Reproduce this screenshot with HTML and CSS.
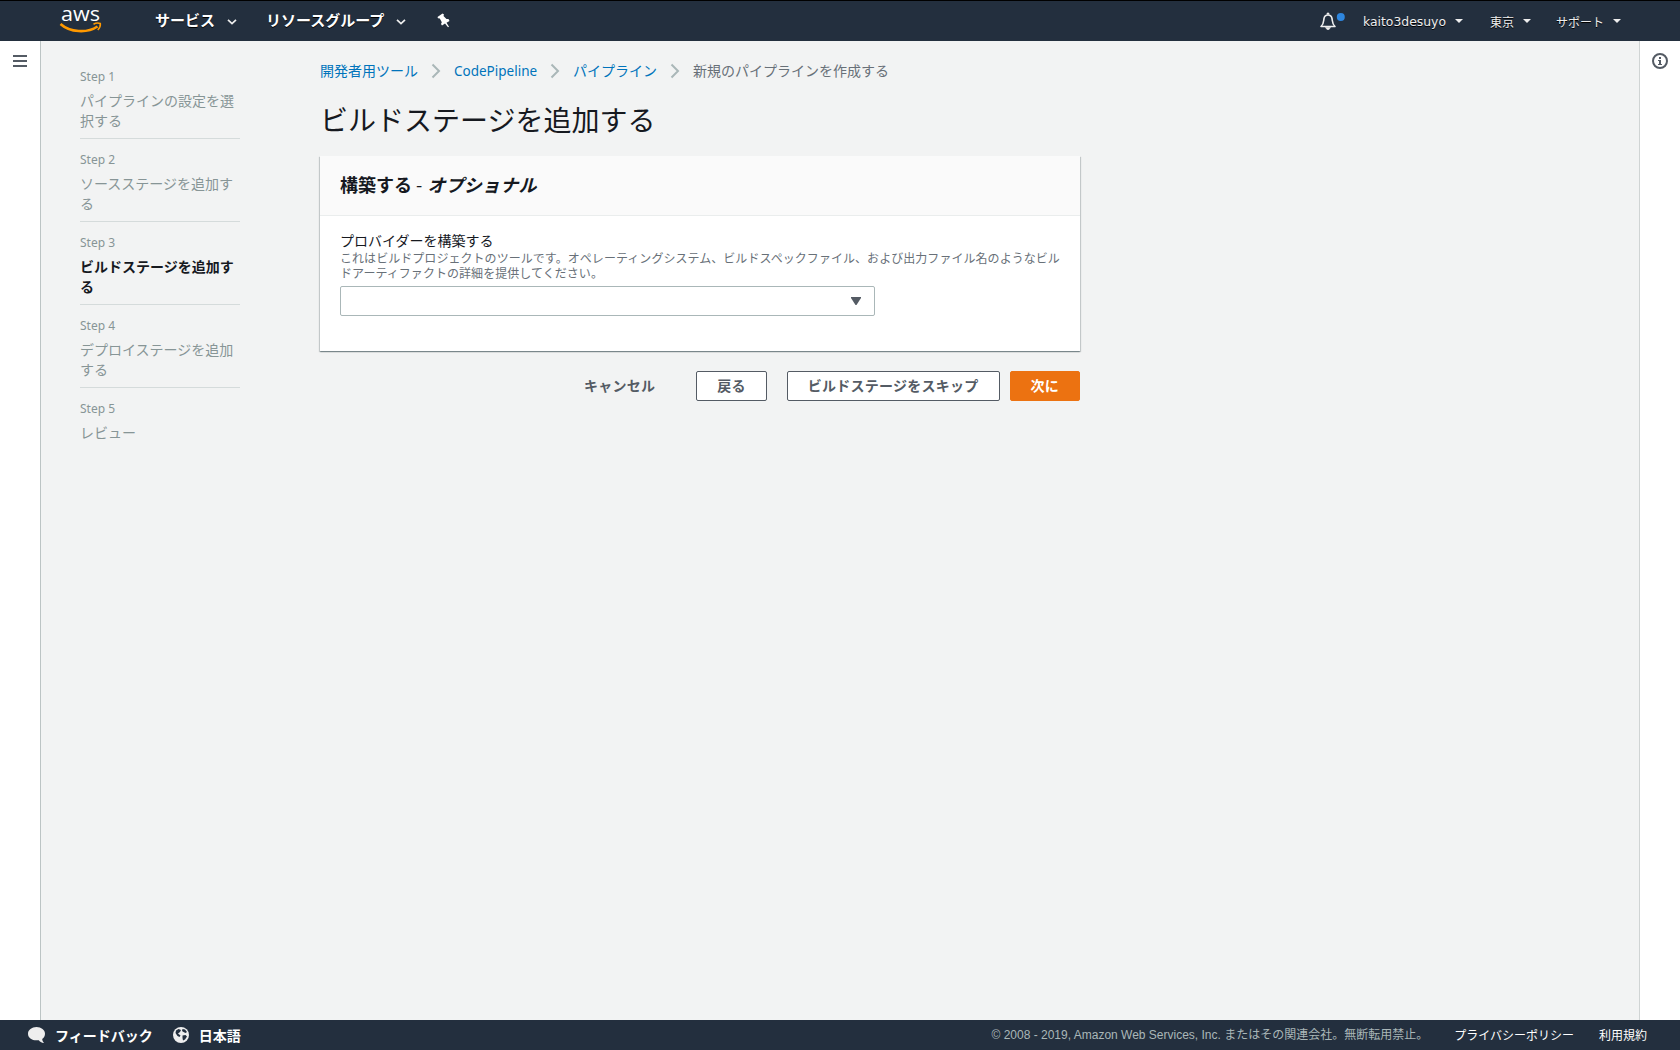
FILE: index.html
```html
<!DOCTYPE html>
<html lang="ja">
<head>
    <meta charset="UTF-8">
    <meta name="viewport" content="width=device-width, initial-scale=1.0">
    <title>ビルドステージを追加する</title>
    <link rel="stylesheet" href="styles.css">
</head>
<body>

    <header>
        <a class="logo" href="#">
            <svg width="43" height="28" viewBox="0 0 43 28">
                <text x="1" y="15" textLength="39" lengthAdjust="spacingAndGlyphs">aws</text>
                <path d="M.5 18C10 26.5 27 27.500 37.500 20.500" fill="none" stroke="#ff9900" stroke-width="2.600"/>
                <path d="M33.500 18.200C36 16.800 39 17 40.300 17.600C40.600 19.500 39.600 22 37.800 24" fill="none" stroke="#ff9900" stroke-width="1.600"/>
            </svg>
        </a>
        <nav class="nav-left">
            <a href="#">サービス <svg class="chevron" width="10" height="6" viewBox="0 0 10 6"><path d="M1 .8l4 3.700 4-3.700"/></svg></a>
            <a href="#">リソースグループ <svg class="chevron" width="10" height="6" viewBox="0 0 10 6"><path d="M1 .8l4 3.700 4-3.700"/></svg></a>
            <a href="#" class="pin">
                <svg width="13" height="15" viewBox="0 0 13 15"><path d="M.5 4L5.500.5 7 1.500 6.500 3 9.500 6 11.500 6 12.500 8 9.500 9.800 12 13.800 11 14.300 8 10.500 5 12.500 4 11 4.800 9.300 2.800 5.500 1 5.300z" fill="#fff"/></svg>
            </a>
        </nav>
        <nav class="nav-right">
            <a href="#" class="bell">
                <svg width="25" height="19" viewBox="0 0 25 19">
                    <path d="M1 14.500C4 12 3.500 9 4 6.500C4.500 4 6 3 8 3S11.500 4 12 6.500C12.500 9 12 12 15 14.500z" fill="none" stroke="#eee" stroke-width="1.600" stroke-linejoin="round"/>
                    <path d="M7 2.500V1h2v1.500M5.500 15.500h5L9 17.500H7z" fill="#eee" stroke="#eee" stroke-width=".6"/>
                    <circle cx="20.800" cy="5" r="4" fill="#2e86de"/>
                </svg>
            </a>
            <a href="#" class="user"><span>kaito3desuyo</span><i class="caret"></i></a>
            <a href="#" class="region"><span>東京</span><i class="caret"></i></a>
            <a href="#" class="support"><span>サポート</span><i class="caret"></i></a>
        </nav>
    </header>

    <div id="layout">
        <aside class="rail rail-left">
            <div class="hamburger"><span></span><span></span><span></span></div>
        </aside>

        <main>
            <ol class="steps">
                <li><small>Step 1</small><p>パイプラインの設定を選択する</p></li>
                <li><small>Step 2</small><p>ソースステージを追加する</p></li>
                <li class="active"><small>Step 3</small><p>ビルドステージを追加する</p></li>
                <li><small>Step 4</small><p>デプロイステージを追加する</p></li>
                <li><small>Step 5</small><p>レビュー</p></li>
            </ol>

            <section class="content">
                <div class="breadcrumb">
                    <a href="#">開発者用ツール</a>
                    <svg width="10" height="16" viewBox="0 0 10 16"><path d="M1.500 1.500L8 8l-6.500 6.500"/></svg>
                    <a href="#" class="latin">CodePipeline</a>
                    <svg width="10" height="16" viewBox="0 0 10 16"><path d="M1.500 1.500L8 8l-6.500 6.500"/></svg>
                    <a href="#">パイプライン</a>
                    <svg width="10" height="16" viewBox="0 0 10 16"><path d="M1.500 1.500L8 8l-6.500 6.500"/></svg>
                    <span>新規のパイプラインを作成する</span>
                </div>

                <h1>ビルドステージを追加する</h1>

                <div class="card">
                    <h2>構築する <span>-</span> <em>オプショナル</em></h2>
                    <div class="card-body">
                        <label>プロバイダーを構築する</label>
                        <p class="hint">これはビルドプロジェクトのツールです。オペレーティングシステム、ビルドスペックファイル、および出力ファイル名のようなビルドアーティファクトの詳細を提供してください。</p>
                        <div class="select">
                            <svg width="10" height="8" viewBox="0 0 10 8"><path d="M0 0h10v1L5.500 8h-1L0 1z" fill="#545b64"/></svg>
                        </div>
                    </div>
                </div>

                <div class="actions">
                    <button class="link">キャンセル</button>
                    <button>戻る</button>
                    <button>ビルドステージをスキップ</button>
                    <button class="primary">次に</button>
                </div>
            </section>
        </main>

        <aside class="rail rail-right">
            <svg width="16" height="16" viewBox="0 0 16 16">
                <circle cx="8" cy="8" r="7" fill="none" stroke="#545b64" stroke-width="2"/>
                <path d="M7 4h2v2H7zM6 7h3v4h1v1H6v-1h1V8H6z" fill="#545b64"/>
            </svg>
        </aside>
    </div>

    <footer>
        <a href="#" class="feedback">
            <svg width="17" height="16" viewBox="0 0 17 16"><path d="M8.500 0C13.200 0 17 3 17 6.700c0 2.300-1 4-2.800 5.200.2 1.600.8 2.800 1.800 4-2.500-.2-4.300-1.200-5.200-2.700C4.500 14 0 11.200 0 6.700 0 3 3.800 0 8.500 0z" fill="#eee"/></svg>
            フィードバック
        </a>
        <a href="#" class="language">
            <svg width="16" height="16" viewBox="0 0 16 16">
                <circle cx="8" cy="8" r="8" fill="#eee"/>
                <path d="M3 3.500L5.500 2 8 3 7 5 5 6.500 7.500 8.500 6.500 10 4.500 9 2.500 6zM9.500 2L12 2.500 14 5 12.500 6 10.500 5 9 4zM9.500 8.500L12.500 8 14 9.500 12 12.500 10 13.500 9.500 11z" fill="#232f3e"/>
            </svg>
            日本語
        </a>
        <span class="copyright">© 2008 - 2019, Amazon Web Services, Inc. またはその関連会社。無断転用禁止。</span>
        <a href="#" class="legal">プライバシーポリシー</a>
        <a href="#" class="legal">利用規約</a>
    </footer>

</body>
</html>
```
FILE: styles.css
```css
* {
    box-sizing: border-box;
}
body {
    margin: 0;
    height: 100vh;
    display: flex;
    flex-direction: column;
    overflow: hidden;
    font-family: "Noto Sans CJK JP", sans-serif;
    font-size: 14px;
    line-height: 20px;
    color: #16191f;
    background-color: #f2f3f3;
}
a {
    color: #0073bb;
    text-decoration: none;
}
svg {
    display: block;
    flex: none;
    overflow: visible;
}
p, h1, h2, ol {
    margin: 0;
    padding: 0;
}

/* header */
header {
    flex: none;
    display: flex;
    height: 41px;
    padding-left: 60px;
    border-top: 1px solid #000;
    background-color: #232f3e;
}
header a {
    display: flex;
    align-items: center;
    color: #fff;
    text-shadow: 0 1px 0 #000;
}
.logo {
    width: 95px;
    padding-bottom: 2px;
    line-height: 28px;
    text-shadow: none;
}
.logo text {
    font-family: "Open Sans", sans-serif;
    font-size: 20px;
    font-weight: 500;
    fill: #fff;
}
.nav-left {
    display: flex;
    flex: 1;
    font-size: 15px;
    font-weight: bold;
}
.nav-left a {
    margin-right: 29px;
    padding-bottom: 2px;
}
.chevron {
    margin: 4px 0 0 12px;
}
.chevron path {
    fill: none;
    stroke: #eee;
    stroke-width: 1.7;
}
.nav-left .pin {
    margin: 0 0 0 2px;
    padding: 0 0 1px;
}
.nav-right {
    display: flex;
    width: 360px;
    font-size: 12px;
}
.nav-right a {
    padding-top: 1px;
    color: #eee;
}
.nav-right .bell {
    width: 43px;
}
.nav-right .user {
    width: 127px;
    font-family: "DejaVu Sans", sans-serif;
    font-size: 12.4px;
}
.region {
    width: 66px;
}
.caret {
    margin: -2px 0 0 9px;
    border: 4px solid transparent;
    border-top-color: #eee;
    border-bottom: 0;
}

/* page */
#layout {
    flex: 1;
    display: flex;
    min-height: 0;
}
.rail {
    flex: none;
    width: 41px;
    background-color: #fff;
}
.rail-left {
    border-right: 1px solid #bcc4c4;
    padding: 14px 13px;
}
.rail-right {
    border-left: 1px solid #d0d4d4;
    padding: 12px;
}
.hamburger {
    display: flex;
    flex-direction: column;
    gap: 3px;
}
.hamburger span {
    width: 14px;
    height: 2px;
    background-color: #545b64;
}
main {
    flex: 1;
    display: flex;
    align-items: flex-start;
    gap: 80px;
    padding: 15px 0 0 39px;
}

.steps {
    width: 160px;
    list-style: none;
    color: #879596;
}
.steps li {
    padding: 11px 0 8px;
    border-bottom: 1px solid #d5dbdb;
}
.steps li:last-child {
    border-bottom: 0;
}
.steps small {
    display: block;
    margin-bottom: 3px;
    font-family: "Noto Sans", sans-serif;
    font-size: 12px;
}
.steps .active p {
    color: #16191f;
    font-weight: bold;
}

.content {
    width: 760px;
}
.breadcrumb {
    display: flex;
    align-items: center;
    height: 30px;
    color: #687078;
}
.breadcrumb a, .breadcrumb span {
    padding-bottom: 2px;
}
.breadcrumb svg {
    margin: 0 13px;
}
.breadcrumb path {
    fill: none;
    stroke: #aab7b8;
    stroke-width: 2;
}
.breadcrumb .latin {
    width: 83px;
    padding: 0;
    font-family: "Noto Sans", sans-serif;
    font-size: 13.5px;
}
h1 {
    margin: 13px 0 17px;
    font-size: 28px;
    font-weight: normal;
    line-height: 40px;
}
.card {
    height: 195px;
    background-color: #fff;
    box-shadow: 0 1px 1px 0 rgba(0, 28, 36, 0.3), 1px 1px 1px 0 rgba(0, 28, 36, 0.15), -1px 1px 1px 0 rgba(0, 28, 36, 0.15);
}
.card h2 {
    height: 60px;
    padding: 13px 20px;
    border-bottom: 1px solid #eaeded;
    background-color: #fafafa;
    font-size: 18px;
    line-height: 30px;
}
.card h2 span {
    margin-right: 1px;
    font-weight: normal;
}
.card h2 em {
    letter-spacing: 0.2px;
}
.card-body {
    padding: 14px 20px;
}
label {
    display: block;
    line-height: 20px;
}
.hint {
    margin: 0 -5px 6px 0;
    color: #687078;
    font-size: 12px;
    line-height: 15px;
    letter-spacing: 0.05px;
}
.select {
    display: flex;
    justify-content: flex-end;
    align-items: center;
    width: 535px;
    height: 30px;
    padding-right: 13px;
    border: 1px solid #aab7b8;
    border-radius: 2px;
}
.actions {
    display: flex;
    justify-content: flex-end;
    gap: 20px;
    margin-top: 20px;
}
button {
    height: 30px;
    padding: 0 20px 2px;
    font: bold 14px/26px "Noto Sans CJK JP", sans-serif;
    letter-spacing: 0.25px;
    white-space: nowrap;
    color: #545b64;
    background-color: #fff;
    border: 1px solid #545b64;
    border-radius: 2px;
    cursor: pointer;
}
.link {
    background-color: transparent;
    border-color: transparent;
}
.primary {
    margin-left: -10px;
    color: #fff;
    background-color: #ec7211;
    border-color: #ec7211;
}

/* footer */
footer {
    flex: none;
    display: flex;
    align-items: center;
    height: 30px;
    padding: 0 33px 1px 28px;
    background-color: #232f3e;
    font-size: 12px;
}
footer a {
    display: flex;
    align-items: center;
    gap: 10px;
    color: #fff;
}
.feedback, .language {
    margin-right: 20px;
    font-size: 14px;
    font-weight: bold;
}
.copyright {
    margin-left: auto;
    font-family: "Liberation Sans", "Noto Sans CJK JP", sans-serif;
    color: #aab7b8;
}
.legal {
    margin-left: 26px;
}
.legal:last-child {
    margin-left: 25px;
}
```
